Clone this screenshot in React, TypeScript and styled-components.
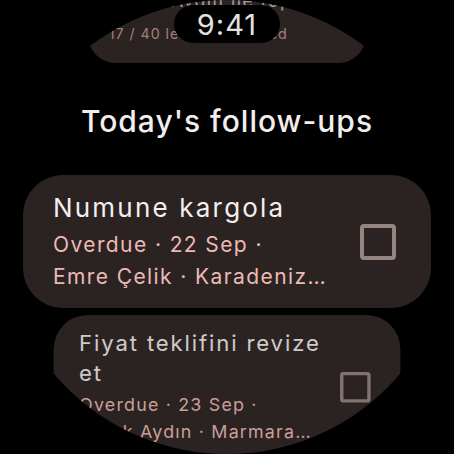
import styled, { createGlobalStyle } from 'styled-components';

const GlobalStyle = createGlobalStyle`
  html, body {
    margin: 0;
    padding: 0;
    background: #000;
  }
  body {
    width: 454px;
    height: 454px;
    overflow: hidden;
    font-family: Inter, "Noto Sans", sans-serif;
  }
`;

const Screen = styled.div`
  position: relative;
  width: 454px;
  height: 454px;
  border-radius: 50%;
  overflow: hidden;
  background: #000;
`;

const TimePill = styled.div`
  position: absolute;
  top: 5px;
  left: 50%;
  transform: translateX(-50%);
  width: 106px;
  height: 38px;
  border-radius: 19px;
  background: #000;
  display: flex;
  align-items: center;
  justify-content: center;
  color: #e2e2e2;
  font-size: 29px;
  line-height: 1;
  letter-spacing: 1px;
  z-index: 2;
`;

const List = styled.div`
  display: flex;
  flex-direction: column;
  align-items: center;
  margin-top: -61px;
`;

const Heading = styled.h1`
  margin: 40px 0 0;
  font-size: 30px;
  line-height: 36px;
  font-weight: 500;
  letter-spacing: 1px;
  color: #f2eeed;
`;

const Card = styled.div<{ $scale?: number; $origin?: string; $gap?: number }>`
  box-sizing: border-box;
  flex-shrink: 0;
  width: 408px;
  margin-top: ${p => p.$gap ?? 0}px;
  display: flex;
  align-items: center;
  gap: 19px;
  padding: 15px 35px 15px 30px;
  border-radius: 40px;
  background: #2b2321;
  transform: scale(${p => p.$scale ?? 1});
  transform-origin: ${p => p.$origin ?? 'center'};
`;

const Body = styled.div<{ $fade?: number }>`
  flex: 1;
  min-width: 0;
  opacity: ${p => p.$fade ?? 1};
`;

const Title = styled.div`
  font-size: 26px;
  line-height: 36px;
  letter-spacing: 2.2px;
  color: #f4efee;
`;

const Meta = styled.div<{ $space?: number; $lines?: number }>`
  margin-top: ${p => p.$space ?? 3}px;
  font-size: 21px;
  line-height: 32px;
  letter-spacing: 1.4px;
  color: #ebbab5;
  display: -webkit-box;
  -webkit-box-orient: vertical;
  -webkit-line-clamp: ${p => p.$lines ?? 2};
  overflow: hidden;
`;

const Name = styled.span`
  white-space: nowrap;
`;

const Check = styled.div<{ $fade?: number }>`
  flex-shrink: 0;
  box-sizing: border-box;
  width: 36px;
  height: 36px;
  border: 4px solid #958581;
  border-radius: 4px;
  opacity: ${p => p.$fade ?? 1};
`;

const Summary = styled.div`
  box-sizing: border-box;
  padding-bottom: 12px;
`;

type Task = { title: string; when: string; contact: string; company: string };

const tasks: Task[] = [
  { title: 'Numune kargola', when: 'Overdue · 22 Sep', contact: 'Emre Çelik', company: 'Karadeniz Tekstil' },
  { title: 'Fiyat teklifini revize et', when: 'Overdue · 23 Sep', contact: 'Burak Aydın', company: 'Marmara Kumaş' },
];

function TaskCard({ task, scale, origin, gap, fade }: { task: Task; scale?: number; origin?: string; gap?: number; fade?: number }) {
  return (
    <Card $scale={scale} $origin={origin} $gap={gap}>
      <Body $fade={fade}>
        <Title>{task.title}</Title>
        <Meta>
          {task.when} · <Name>{task.contact}</Name> · {task.company}
        </Meta>
      </Body>
      <Check $fade={fade} />
    </Card>
  );
}

export default function App() {
  return (
    <>
      <GlobalStyle />
      <Screen>
        <TimePill>9:41</TimePill>
        <List>
          <Card $scale={0.68} $origin="bottom center">
            <Body $fade={0.6}>
              <Summary>
                <Title>Burak Aydın ile toplantı</Title>
                <Meta $space={14} $lines={1}>17 / 40 leads contacted</Meta>
              </Summary>
            </Body>
          </Card>
          <Heading>Today's follow-ups</Heading>
          <TaskCard task={tasks[0]} gap={36} />
          <TaskCard task={tasks[1]} gap={7} scale={0.85} origin="top center" fade={0.82} />
        </List>
      </Screen>
    </>
  );
}
